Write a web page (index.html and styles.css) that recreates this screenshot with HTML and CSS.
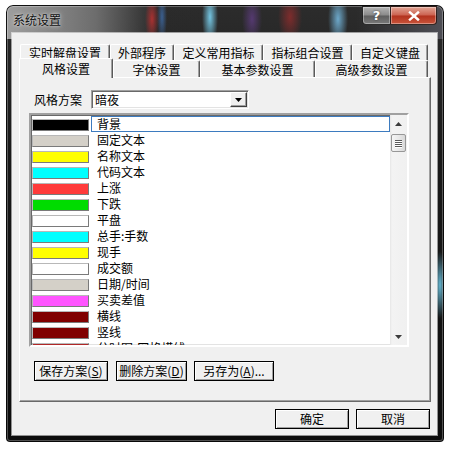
FILE: index.html
```html
<!DOCTYPE html>
<html lang="zh-CN">
<head>
<meta charset="utf-8">
<title>系统设置</title>
<link rel="stylesheet" href="styles.css">
</head>
<body>
<div class="window">
  <div class="titlebar">
    <span class="title">系统设置</span>
    <div class="caption">
      <div class="cbtn help">?</div>
      <div class="cbtn close"><svg width="12" height="10" viewBox="0 0 12 10"><path d="M2 1.5 L10 8.5 M10 1.5 L2 8.5" stroke="#fff" stroke-width="2.4" stroke-linecap="square"/></svg></div>
    </div>
  </div>
  <div class="client">
    <div class="tabs">
      <div class="tabrow back">
        <div class="tab">实时解盘设置</div>
        <div class="tab">外部程序</div>
        <div class="tab">定义常用指标</div>
        <div class="tab">指标组合设置</div>
        <div class="tab">自定义键盘</div>
      </div>
      <div class="tabrow front">
        <div class="tab active">风格设置</div>
        <div class="tab">字体设置</div>
        <div class="tab">基本参数设置</div>
        <div class="tab">高级参数设置</div>
      </div>
    </div>
    <div class="panel">
      <div class="scheme">
        <span class="label">风格方案</span>
        <div class="combo">
          <span class="combo-text">暗夜</span>
          <span class="combo-btn"><svg width="7" height="4" viewBox="0 0 7 4"><path d="M0 0 H7 L3.5 4 Z" fill="#000"/></svg></span>
        </div>
      </div>
      <div class="listbox">
        <div class="items">
          <div class="item selected"><span class="sw c-black"></span><span class="name">背景</span></div>
          <div class="item"><span class="sw c-silver"></span><span class="name">固定文本</span></div>
          <div class="item"><span class="sw c-yellow"></span><span class="name">名称文本</span></div>
          <div class="item"><span class="sw c-cyan"></span><span class="name">代码文本</span></div>
          <div class="item"><span class="sw c-red"></span><span class="name">上涨</span></div>
          <div class="item"><span class="sw c-green"></span><span class="name">下跌</span></div>
          <div class="item"><span class="sw c-white"></span><span class="name">平盘</span></div>
          <div class="item"><span class="sw c-cyan"></span><span class="name">总手:手数</span></div>
          <div class="item"><span class="sw c-yellow"></span><span class="name">现手</span></div>
          <div class="item"><span class="sw c-white"></span><span class="name">成交额</span></div>
          <div class="item"><span class="sw c-silver"></span><span class="name">日期/时间</span></div>
          <div class="item"><span class="sw c-magenta"></span><span class="name">买卖差值</span></div>
          <div class="item"><span class="sw c-maroon"></span><span class="name">横线</span></div>
          <div class="item"><span class="sw c-maroon"></span><span class="name">竖线</span></div>
          <div class="item"><span class="sw c-brick"></span><span class="name">分时图-网格横线</span></div>
        </div>
        <div class="vscroll">
          <div class="arrow"><svg width="7" height="4" viewBox="0 0 7 4"><path d="M3.5 0 L7 4 H0 Z" fill="#3c3c3c"/></svg></div>
          <div class="thumb"><i></i><i></i><i></i><i></i></div>
          <div class="track"></div>
          <div class="arrow"><svg width="7" height="4" viewBox="0 0 7 4"><path d="M0 0 H7 L3.5 4 Z" fill="#3c3c3c"/></svg></div>
        </div>
      </div>
      <div class="actions">
        <button class="btn w-save">保存方案(<u>S</u>)</button>
        <button class="btn w-del">删除方案(<u>D</u>)</button>
        <button class="btn w-as">另存为(<u>A</u>)...</button>
      </div>
    </div>
    <div class="footer">
      <button class="btn w-ok">确定</button>
      <button class="btn w-ok">取消</button>
    </div>
  </div>
</div>
</body>
</html>
```

FILE: styles.css
```css
* { box-sizing: border-box; }

body {
  margin: 0;
  background: #fff;
  font: 12px/14px "Noto Sans CJK SC", "Noto Sans", sans-serif;
  color: #000;
}

.window {
  margin: 5px 0 0 6px;
  width: 438px;
  height: 437px;
  padding: 0 7px 7px 6px;
  border-radius: 7px 7px 4px 4px;
  display: flex;
  flex-direction: column;
  background:
    radial-gradient(7px 24px at 146px 14px, rgba(210, 50, 50, .75), transparent),
    radial-gradient(5px 26px at 156px 12px, rgba(70, 130, 210, .6), transparent),
    radial-gradient(8px 30px at 204px 12px, rgba(120, 205, 235, .95), transparent),
    radial-gradient(10px 26px at 246px 14px, rgba(120, 70, 170, .55), transparent),
    radial-gradient(12px 26px at 284px 12px, rgba(170, 45, 45, .65), transparent),
    radial-gradient(10px 28px at 332px 14px, rgba(120, 190, 230, .85), transparent),
    radial-gradient(6px 34px at 434px 280px, rgba(110, 200, 230, .9), transparent),
    linear-gradient(90deg, rgba(165, 165, 165, .95) 0, rgba(120, 120, 120, .85) 90px, rgba(40, 40, 40, .2) 150px, rgba(0, 0, 0, 0) 200px, rgba(0, 0, 0, 0) 350px, rgba(95, 95, 105, .7) 438px) top / 100% 34px no-repeat,
    linear-gradient(#2c2c2c, #1a1a1a 150px, #0c0c0c);
  box-shadow: inset 0 0 0 1px rgba(0, 0, 0, .9), inset 0 0 0 2px rgba(255, 255, 255, .28);
}

.titlebar {
  height: 28px;
  flex: none;
  display: flex;
  justify-content: space-between;
  align-items: flex-start;
}

.title {
  padding: 8px 0 0 1px;
  color: #111;
  text-shadow: 0 0 5px rgba(235, 235, 235, .85), 0 0 2px rgba(235, 235, 235, .7);
}

.caption {
  display: flex;
  margin-top: 1px;
  height: 19px;
}

.cbtn {
  height: 19px;
  border: 1px solid rgba(20, 20, 20, .85);
  display: flex;
  align-items: center;
  justify-content: center;
  box-shadow: inset 0 0 0 1px rgba(255, 255, 255, .35);
}

.help {
  width: 28px;
  border-right: none;
  border-radius: 0 0 0 4px;
  background: linear-gradient(#b4b4b4, #8a8a8a 48%, #5e5e5e 52%, #7a7a7a);
  color: #fff;
  font: bold 13px/14px "DejaVu Sans", sans-serif;
  text-shadow: 0 0 2px #333;
}

.close {
  width: 47px;
  border-radius: 0 0 4px 0;
  background: linear-gradient(#e2a595, #cc6250 48%, #b2321e 52%, #c9543a);
}

.client {
  flex: 1;
  background: #f0f0f0;
  padding: 11px 6px 0 7px;
  box-shadow: 0 0 0 1px rgba(255, 255, 255, .55);
  display: flex;
  flex-direction: column;
}

.tabs { width: 412px; }

.tabrow { display: grid; }

.back {
  grid-template-columns: 90px 64px 89px 89px 76px;
  height: 16px;
  margin-left: 1px;
}

.front {
  grid-template-columns: 92px 87px 115px 113px;
  height: 17px;
  margin-left: 2px;
}

.tab {
  display: flex;
  align-items: center;
  justify-content: center;
  white-space: nowrap;
  background: #f0f0f0;
  border-top: 1px solid #fff;
  border-left: 1px solid #fff;
  border-right: 1px solid #5a5a5a;
  box-shadow: inset -1px 0 #a0a0a0;
  border-radius: 2px 2px 0 0;
  padding-top: 1px;
}

.tab.active {
  position: relative;
  z-index: 1;
  height: 20px;
  align-self: start;
  margin: -2px 0 0 -2px;
  padding-top: 0;
}

.panel {
  width: 412px;
  height: 325px;
  flex: none;
  border-top: 1px solid #fff;
  border-left: 1px solid #fff;
  border-right: 1px solid #696969;
  border-bottom: 1px solid #696969;
  box-shadow: inset -1px -1px #a0a0a0;
  padding-top: 12px;
  display: flex;
  flex-direction: column;
}

.scheme {
  display: flex;
  align-items: center;
  margin-left: 14px;
  height: 19px;
}

.label { width: 57px; }

.combo {
  width: 158px;
  height: 19px;
  display: flex;
  align-items: center;
  justify-content: space-between;
  background: #fff;
  border: 1px solid;
  border-color: #a0a0a0 #fff #fff #a0a0a0;
  box-shadow: inset 1px 1px #696969, inset -1px -1px #e3e3e3;
  padding: 1px 1px 1px 2px;
}

.combo-text { padding-left: 1px; }

.combo-btn {
  width: 17px;
  height: 15px;
  display: flex;
  align-items: center;
  justify-content: center;
  background: #f0f0f0;
  border: 1px solid;
  border-color: #fff #404040 #404040 #fff;
  box-shadow: inset -1px -1px #a0a0a0;
}

.listbox {
  margin: 4px 0 0 9px;
  width: 380px;
  height: 234px;
  display: flex;
  background: #fff;
  border: 2px solid;
  border-color: #a0a0a0 #fff #fff #a0a0a0;
  box-shadow: inset 1px 1px #696969, inset -1px -1px #e3e3e3;
  overflow: hidden;
}

.items {
  width: 359px;
  padding-top: 1px;
  overflow: hidden;
}

.item {
  height: 16px;
  display: flex;
}

.sw {
  width: 57px;
  height: 12px;
  margin: 3px 0 1px 1px;
  border: 1px solid;
  border-color: #b8b8b8 #7a7a7a #7a7a7a #b8b8b8;
  flex: none;
}

.name {
  flex: 1;
  margin-left: 2px;
  padding: 0 0 0 5px;
  line-height: 14px;
  border: 1px solid transparent;
  white-space: nowrap;
}

.item.selected .name { border-color: #3d7bbf; }

.c-black { background: #000; }
.c-silver { background: #d4d0c8; }
.c-yellow { background: #ffff00; }
.c-cyan { background: #00ffff; }
.c-red { background: #ff3b3b; }
.c-green { background: #00dc00; }
.c-white { background: #fff; }
.c-magenta { background: #ff55ff; }
.c-maroon { background: #800000; }
.c-brick { background: #b02828; }

.vscroll {
  width: 17px;
  display: flex;
  flex-direction: column;
  background: linear-gradient(90deg, #e6e6e6, #f3f3f3 2px, #f0f0f0);
}

.arrow {
  height: 17px;
  display: flex;
  align-items: center;
  justify-content: center;
  flex: none;
}

.thumb {
  margin: 2px 1px 0 1px;
  height: 18px;
  border: 1px solid #979797;
  border-radius: 2px;
  background: linear-gradient(90deg, #f5f5f5, #e8e8e8 50%, #d8d8d8);
  display: flex;
  flex-direction: column;
  align-items: center;
  justify-content: center;
  gap: 1px;
  flex: none;
}

.thumb i {
  display: block;
  width: 7px;
  height: 1px;
  background: #5a5a5a;
  box-shadow: 0 1px #fff;
}

.track { flex: 1; }

.actions {
  display: flex;
  margin: 14px 0 0 14px;
}

.btn {
  height: 20px;
  padding: 0;
  font: inherit;
  color: #000;
  background: #f0f0f0;
  border: 1px solid #000;
  box-shadow: inset 1px 1px #fff, inset -1px -1px #a0a0a0;
  white-space: nowrap;
}

.btn u { text-decoration-thickness: 1px; text-underline-offset: 1px; }

.w-save { width: 74px; margin-right: 8px; }
.w-del { width: 71px; margin-right: 7px; }
.w-as { width: 80px; }

.footer {
  display: flex;
  justify-content: flex-end;
  gap: 7px;
  margin: 7px 1px 0 0;
}

.w-ok { width: 74px; }
```
